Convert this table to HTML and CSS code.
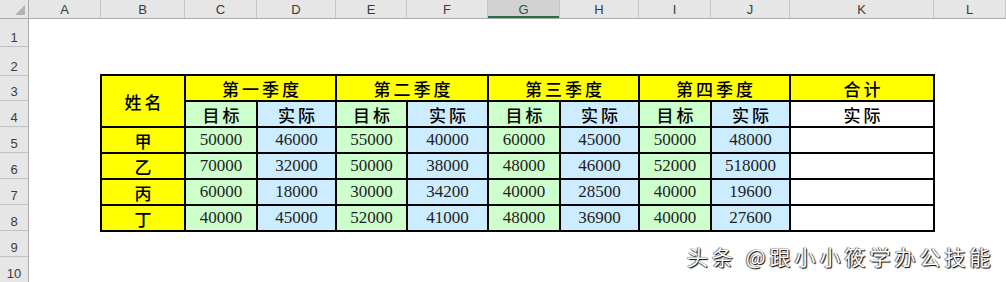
FILE: index.html
```html
<!DOCTYPE html>
<html lang="zh-CN">
<head>
<meta charset="utf-8">
<title>季度目标与实际</title>
<link rel="stylesheet" href="styles.css">
</head>
<body>
<div class="sheet">
  <div class="corner"><span class="tri"></span></div>
  <div class="colhdr">
    <div class="ch w-a">A</div>
    <div class="ch w-b">B</div>
    <div class="ch w-c">C</div>
    <div class="ch w-d">D</div>
    <div class="ch w-e">E</div>
    <div class="ch w-f">F</div>
    <div class="ch w-g sel">G</div>
    <div class="ch w-h">H</div>
    <div class="ch w-i">I</div>
    <div class="ch w-j">J</div>
    <div class="ch w-k">K</div>
    <div class="ch w-l">L</div>
    <div class="ch rest"></div>
  </div>
  <div class="rowhdr">
    <div class="rh h-1">1</div>
    <div class="rh h-2">2</div>
    <div class="rh h-3">3</div>
    <div class="rh h-n">4</div>
    <div class="rh h-n">5</div>
    <div class="rh h-n">6</div>
    <div class="rh h-n">7</div>
    <div class="rh h-n">8</div>
    <div class="rh h-n">9</div>
    <div class="rh h-n">10</div>
  </div>
  <div class="cells">
    <div class="data">
      <div class="cell y hd name">姓名</div>
      <div class="cell y hd q">第一季度</div>
      <div class="cell y hd q">第二季度</div>
      <div class="cell y hd q">第三季度</div>
      <div class="cell y hd q">第四季度</div>
      <div class="cell y hd">合计</div>

      <div class="cell g hd">目标</div>
      <div class="cell b hd">实际</div>
      <div class="cell g hd">目标</div>
      <div class="cell b hd">实际</div>
      <div class="cell g hd">目标</div>
      <div class="cell b hd">实际</div>
      <div class="cell g hd">目标</div>
      <div class="cell b hd">实际</div>
      <div class="cell w hd">实际</div>

      <div class="cell y hd">甲</div>
      <div class="cell g num">50000</div>
      <div class="cell b num">46000</div>
      <div class="cell g num">55000</div>
      <div class="cell b num">40000</div>
      <div class="cell g num">60000</div>
      <div class="cell b num">45000</div>
      <div class="cell g num">50000</div>
      <div class="cell b num">48000</div>
      <div class="cell w"></div>

      <div class="cell y hd">乙</div>
      <div class="cell g num">70000</div>
      <div class="cell b num">32000</div>
      <div class="cell g num">50000</div>
      <div class="cell b num">38000</div>
      <div class="cell g num">48000</div>
      <div class="cell b num">46000</div>
      <div class="cell g num">52000</div>
      <div class="cell b num">518000</div>
      <div class="cell w"></div>

      <div class="cell y hd">丙</div>
      <div class="cell g num">60000</div>
      <div class="cell b num">18000</div>
      <div class="cell g num">30000</div>
      <div class="cell b num">34200</div>
      <div class="cell g num">40000</div>
      <div class="cell b num">28500</div>
      <div class="cell g num">40000</div>
      <div class="cell b num">19600</div>
      <div class="cell w"></div>

      <div class="cell y hd">丁</div>
      <div class="cell g num">40000</div>
      <div class="cell b num">45000</div>
      <div class="cell g num">52000</div>
      <div class="cell b num">41000</div>
      <div class="cell g num">48000</div>
      <div class="cell b num">36900</div>
      <div class="cell g num">40000</div>
      <div class="cell b num">27600</div>
      <div class="cell w"></div>
    </div>
    <div class="watermark">头条 @跟小小筱学办公技能</div>
  </div>
</div>
</body>
</html>
```

FILE: styles.css
```css
html, body {
  margin: 0;
  padding: 0;
  background: #ffffff;
}

.sheet {
  width: 1006px;
  height: 282px;
  overflow: hidden;
  display: grid;
  grid-template-columns: 29px 1fr;
  grid-template-rows: 19px 1fr;
  font-family: "Liberation Sans", Arial, sans-serif;
}

.corner {
  background: #e6e6e6;
  border-right: 1px solid #ababab;
  border-bottom: 1px solid #ababab;
  box-sizing: border-box;
  display: flex;
  justify-content: flex-end;
  align-items: flex-end;
  padding: 0 3px 3px 0;
}

.tri {
  width: 10px;
  height: 10px;
  background: #b4b4b4;
  clip-path: polygon(100% 0, 100% 100%, 0 100%);
}

.colhdr {
  display: flex;
  background: #e6e6e6;
  border-bottom: 1px solid #ababab;
  box-sizing: border-box;
}

.ch {
  flex: none;
  box-sizing: border-box;
  border-right: 1px solid #c6c6c6;
  display: flex;
  align-items: center;
  justify-content: center;
  font-size: 13px;
  color: #3c3c3c;
  padding-top: 1px;
}

.ch.sel {
  background: #d2d2d2;
  box-shadow: inset 0 -2px 0 #217346;
  color: #1e5c38;
}

.ch.rest { flex: 1; border-right: none; }

.w-a { width: 72px; }
.w-b { width: 84px; }
.w-c { width: 72px; }
.w-d { width: 79px; }
.w-e { width: 71px; }
.w-f { width: 81px; }
.w-g { width: 72px; }
.w-h { width: 79px; }
.w-i { width: 72px; }
.w-j { width: 79px; }
.w-k { width: 144px; }
.w-l { width: 72px; }

.rowhdr {
  display: flex;
  flex-direction: column;
  background: #e6e6e6;
  border-right: 1px solid #ababab;
}

.rh {
  flex: none;
  box-sizing: border-box;
  border-bottom: 1px solid #c0c0c0;
  display: flex;
  align-items: flex-end;
  justify-content: center;
  font-size: 13px;
  line-height: 13px;
  color: #3c3c3c;
  padding-bottom: 2px;
}

.h-1 { height: 28px; }
.h-2 { height: 29px; }
.h-3 { height: 25px; }
.h-n { height: 26px; }

.cells {
  position: relative;
  background: #ffffff;
}

.data {
  margin: 55px 0 0 71px;
  width: max-content;
  display: grid;
  grid-template-columns: 82px 70px 77px 69px 79px 70px 77px 70px 77px 142px;
  grid-template-rows: repeat(6, 24px);
  gap: 2px;
  padding: 2px;
  background: #000000;
}

.cell {
  display: flex;
  align-items: center;
  justify-content: center;
  overflow: hidden;
  white-space: nowrap;
}

.name { grid-row: span 2; }
.q { grid-column: span 2; }

.y { background: #ffff00; }
.g { background: #ccffcc; }
.b { background: #ccecff; }
.w { background: #ffffff; }

.hd {
  font-family: "Noto Sans CJK SC", "Noto Sans CJK JP", sans-serif;
  font-weight: 500;
  font-size: 17px;
  letter-spacing: 3px;
  padding-left: 3px;
  color: #000000;
}

.num {
  font-family: "Liberation Serif", "Times New Roman", serif;
  font-size: 17px;
  color: #1e1e1e;
}

.watermark {
  position: absolute;
  left: 658px;
  top: 225px;
  font-family: "Noto Sans CJK SC", sans-serif;
  font-size: 21px;
  line-height: 24px;
  letter-spacing: 4px;
  color: #ffffff;
  text-shadow: 1px 1px 1px #000000, -1px 0 1px rgba(0, 0, 0, 0.55), 0 0 1px rgba(0, 0, 0, 0.6);
  white-space: nowrap;
}
```
